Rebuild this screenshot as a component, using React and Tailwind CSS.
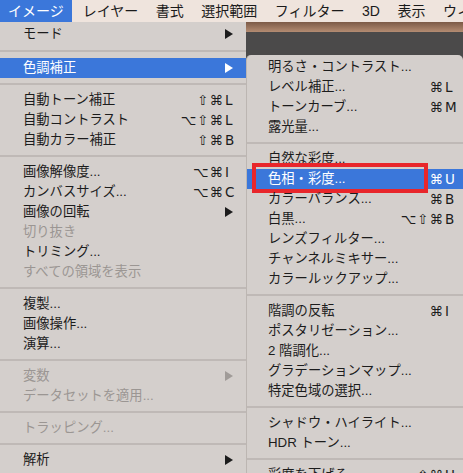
import React from 'react';

const FONT = { fontFamily: '"Liberation Sans", "Noto Sans CJK JP", "DejaVu Sans", sans-serif' };
const KEYFONT = { fontFamily: '"DejaVu Sans", "Liberation Sans", sans-serif' };

const SEP = { sep: true };

const leftItems = [
    { label: 'モード', arrow: true },
    { sep: true, h: 14 },
    { label: '色調補正', arrow: true, active: true },
    SEP,
    { label: '自動トーン補正', mods: '⇧⌘', k: 'L' },
    { label: '自動コントラスト', mods: '⌥⇧⌘', k: 'L' },
    { label: '自動カラー補正', mods: '⇧⌘', k: 'B' },
    SEP,
    { label: '画像解像度...', mods: '⌥⌘', k: 'I' },
    { label: 'カンバスサイズ...', mods: '⌥⌘', k: 'C' },
    { label: '画像の回転', arrow: true },
    { label: '切り抜き', disabled: true },
    { label: 'トリミング...' },
    { label: 'すべての領域を表示', disabled: true },
    SEP,
    { label: '複製...' },
    { label: '画像操作...' },
    { label: '演算...' },
    SEP,
    { label: '変数', arrow: true, disabled: true },
    { label: 'データセットを適用...', disabled: true },
    SEP,
    { label: 'トラッピング...', disabled: true },
    SEP,
    { label: '解析', arrow: true },
];

const rightItems = [
    { label: '明るさ・コントラスト...' },
    { label: 'レベル補正...', mods: '⌘', k: 'L' },
    { label: 'トーンカーブ...', mods: '⌘', k: 'M' },
    { label: '露光量...' },
    SEP,
    { label: '自然な彩度...' },
    { label: '色相・彩度...', mods: '⌘', k: 'U', active: true, marked: true },
    { label: 'カラーバランス...', mods: '⌘', k: 'B' },
    { label: '白黒...', mods: '⌥⇧⌘', k: 'B' },
    { label: 'レンズフィルター...' },
    { label: 'チャンネルミキサー...' },
    { label: 'カラールックアップ...' },
    SEP,
    { label: '階調の反転', mods: '⌘', k: 'I' },
    { label: 'ポスタリゼーション...' },
    { label: '2 階調化...' },
    { label: 'グラデーションマップ...' },
    { label: '特定色域の選択...' },
    SEP,
    { label: 'シャドウ・ハイライト...' },
    { label: 'HDR トーン...' },
    SEP,
    { label: '彩度を下げる', mods: '⇧⌘', k: 'U' },
];

const Arrow = ({ color }) => (
    <svg width="8" height="10" viewBox="0 0 8 10" className="mr-[5px]">
        <polygon points="0,0 8,5 0,10" fill={color} />
    </svg>
);

const MenuRow = ({ item, padLeft, keyWidth, padRight }) => {
    if (item.sep) {
        return (
            <div className="flex flex-col justify-center" style={{ height: item.h || 12 }}>
                <div className="h-[2px] bg-[#bfb9b6]" />
            </div>
        );
    }
    const text = item.active ? 'text-white' : item.disabled ? 'text-[#9b9693]' : 'text-[#1c1c1c]';
    const arrowColor = item.active ? '#ffffff' : item.disabled ? '#a09b98' : '#1c1c1c';
    return (
        <div
            className={`relative flex items-center h-[20px] text-[13.3px] ${text} ${item.active ? 'bg-[#3b77da]' : ''}`}
            style={{ paddingLeft: padLeft, paddingRight: padRight }}
        >
            <span className="flex-1 whitespace-nowrap">{item.label}</span>
            {item.arrow && <Arrow color={arrowColor} />}
            {item.k && (
                <span className="flex items-center text-[13.5px]" style={KEYFONT}>
                    <span className="tracking-[1px]">{item.mods}</span>
                    <span className="ml-[1px]" style={{ width: keyWidth }}>{item.k}</span>
                </span>
            )}
            {item.marked && (
                <div className="absolute left-[5px] top-[-6px] w-[176px] h-[30px] border-[4px] border-[#e8262b]" />
            )}
        </div>
    );
};

const App = () => {
    const bar = ['レイヤー', '書式', '選択範囲', 'フィルター', '3D', '表示', 'ウィンドウ'];

    return (
        <div className="w-[463px] h-[473px] overflow-hidden bg-[#d4cfcc] flex flex-col" style={FONT}>
            {/* menu bar */}
            <div className="h-[22px] shrink-0 bg-[#efe4dd] flex items-center text-[14px] text-[#1a1a1a] whitespace-nowrap overflow-hidden">
                <div className="h-full px-[8px] bg-[#3b77da] text-white flex items-center">イメージ</div>
                <div className="flex items-center gap-[17.5px] ml-[11px]">
                    {bar.map((b) => (
                        <span key={b}>{b}</span>
                    ))}
                </div>
            </div>

            <div className="flex flex-1 min-h-0">
                {/* left menu */}
                <div className="w-[246px] shrink-0 pt-[2px] bg-[#d4cfcc]">
                    {leftItems.map((item, i) => (
                        <MenuRow key={i} item={item} padLeft={23} keyWidth={13} padRight={8} />
                    ))}
                </div>

                {/* canvas + submenu */}
                <div className="flex-1 flex flex-col bg-[#4b4a4a]">
                    <div className="h-[10px] shrink-0 bg-gradient-to-b from-[#7c5a47] to-[#b48c72]" />
                    <div className="h-[23px] shrink-0" />
                    <div className="flex-1 bg-[#d4cfcc] rounded-t-[5px] border-l border-[#bcb6b2] pt-[2px]">
                        {rightItems.map((item, i) => (
                            <MenuRow key={i} item={item} padLeft={21} keyWidth={14} padRight={4} />
                        ))}
                    </div>
                </div>
            </div>
        </div>
    );
};

export default App;
